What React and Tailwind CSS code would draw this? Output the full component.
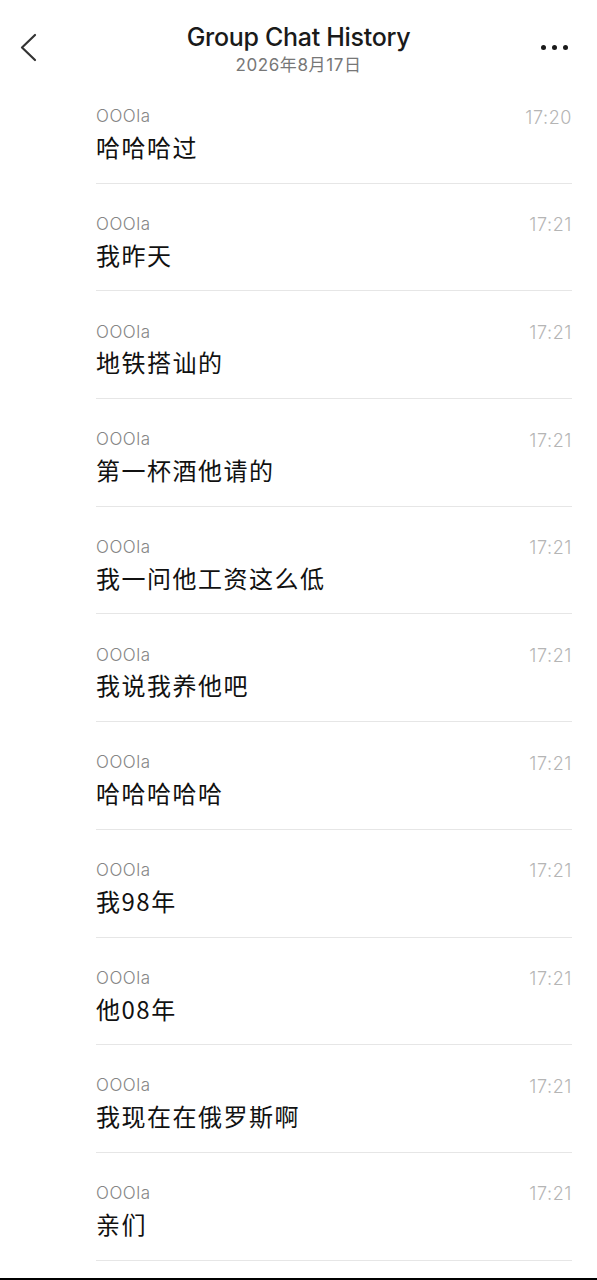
import React from "react";

const rows = [
  ["17:20", "哈哈哈过"],
  ["17:21", "我昨天"],
  ["17:21", "地铁搭讪的"],
  ["17:21", "第一杯酒他请的"],
  ["17:21", "我一问他工资这么低"],
  ["17:21", "我说我养他吧"],
  ["17:21", "哈哈哈哈哈"],
  ["17:21", "我98年"],
  ["17:21", "他08年"],
  ["17:21", "我现在在俄罗斯啊"],
  ["17:21", "亲们"],
];

const sans = { fontFamily: 'Inter, "Noto Sans CJK SC", sans-serif' };
const cjk = { fontFamily: '"Noto Sans CJK SC", "Noto Sans", sans-serif' };

export default function App() {
  return (
    <div className="h-[1280px] w-[597px] bg-white flex flex-col overflow-hidden" style={sans}>
      <header className="relative h-[76px] shrink-0 flex flex-col items-center">
        <svg className="absolute left-[18px] top-[32px]" width="22" height="32" viewBox="0 0 22 32" fill="none">
          <path d="M17 3 L4 15.5 L17 28" stroke="#333" strokeWidth="2.2" strokeLinecap="round" strokeLinejoin="round" />
        </svg>
        <div className="absolute left-[541px] top-[45px] flex gap-[6px]">
          <span className="block w-[5px] h-[5px] rounded-full bg-[#1a1a1a]" />
          <span className="block w-[5px] h-[5px] rounded-full bg-[#1a1a1a]" />
          <span className="block w-[5px] h-[5px] rounded-full bg-[#1a1a1a]" />
        </div>
        <div className="mt-[20px] text-[25px] leading-[34px] font-medium text-[#1a1a1a] tracking-[-0.3px]">Group Chat History</div>
        <div className="text-[17px] leading-[22px] text-[#777] tracking-[0.6px]">2026年8月17日</div>
      </header>
      <div className="flex flex-col">
        {rows.map(([t, m], i) => (
          <div key={i} className="ml-[96px] mr-[25px] border-b border-[#e6e6e6] pt-[31px] pb-[20.7px]">
            <div className="flex justify-between items-center h-[20px]">
              <span className="text-[17px] font-light text-[#858585] tracking-[0.5px]">OOOla</span>
              <span className="text-[18px] font-light text-[#b5b5b5] tracking-[0.6px]">{t}</span>
            </div>
            <div className="mt-[5px] h-[30px] leading-[30px] text-[24px] text-[#111] tracking-[1.5px]" style={cjk}>{m}</div>
          </div>
        ))}
      </div>
      <div className="flex-1" />
      <div className="h-[2px] bg-black shrink-0" />
    </div>
  );
}
